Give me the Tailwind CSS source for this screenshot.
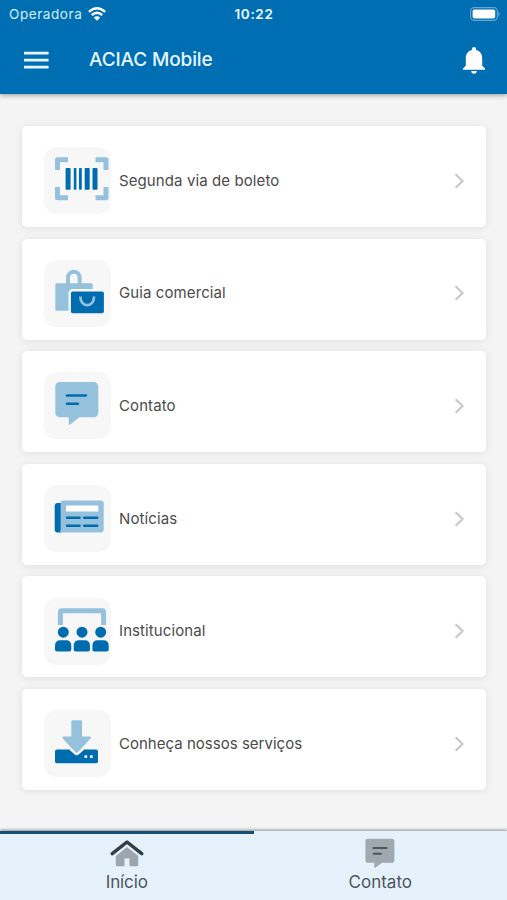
<!DOCTYPE html>
<html lang="pt-BR">
<head>
<meta charset="utf-8">
<meta name="viewport" content="width=device-width, initial-scale=1">
<title>ACIAC Mobile</title>
<script src="https://cdn.jsdelivr.net/npm/@tailwindcss/browser@4"></script>
</head>
<body class="bg-[#f4f4f4] font-['Inter','Liberation_Sans',sans-serif]">
<div class="flex h-[900px] w-[507px] flex-col overflow-hidden">
  <header class="z-10 h-[94px] shrink-0 bg-[#006eb3] text-white shadow-[0_1px_5px_rgba(0,0,0,0.4)]">
    <div class="grid h-[27px] grid-cols-3 items-center pl-[9px] pr-[7px]">
      <div class="flex items-center gap-[6px]">
        <span class="pt-px text-[13.5px] tracking-[0.57px] text-[#d3eefc]">Operadora</span>
        <svg class="h-[14px] w-[18px]" viewBox="0 0 18 14" fill="none" stroke="#fff" stroke-width="2.4"><path d="M.9 4.9Q9-2.3 17.1 4.9M3.8 8Q9 3.4 14.2 8"/><path d="M9 13.7 5.8 10.5Q9 7.9 12.2 10.5Z" fill="#fff" stroke="none"/></svg>
      </div>
      <span class="pr-[1px] pt-px text-center text-[13.5px] font-semibold tracking-[0.65px] text-[#edf9ff]">10:22</span>
      <svg class="h-[14px] w-[31px] justify-self-end" viewBox="0 0 31 14"><rect x="1.6" y=".6" width="26.8" height="12.8" rx="3.6" fill="none" stroke="#65a8d3" stroke-width="1.1"/><rect x="3.6" y="2.5" width="22.6" height="9" rx="1.8" fill="#fff"/><path d="M29.4 4.6Q32 7 29.4 9.4Z" fill="#65a8d3"/></svg>
    </div>
    <div class="flex h-[66px] items-center pl-6 pr-[22px]">
      <svg class="h-[18px] w-[25px]" viewBox="0 0 25 18" fill="#e4f7ff"><path d="M0 .7h24.6v2.7H0zM0 7.7h24.6v2.7H0zM0 14.7h24.6v2.7H0z"/></svg>
      <h1 class="ml-[40px] pt-px text-[19px] font-medium tracking-[-0.12px] text-[#e4f7ff]">ACIAC Mobile</h1>
      <svg class="ml-auto h-[27px] w-[22px]" viewBox="0 0 22 27" fill="#fff"><path d="M0 22.7v-1.2l2.8-2.8v-7.2c0-4.4 2.1-7.4 6.1-8.4V2.2a2.1 2.1 0 0 1 4.2 0v.9c4 1 6.1 4 6.1 8.4v7.2l2.8 2.8v1.2zM8.3 24h5.4a2.7 2.7 0 0 1-5.4 0z"/></svg>
    </div>
  </header>

  <main class="flex grow flex-col gap-[11.6px] px-[22px] pt-8 text-[15px] tracking-[0.1px] text-[#4b4b4b]">
    <a class="flex h-[101px] w-[464px] shrink-0 items-center rounded-[5px] bg-white pl-[22px] pr-[21px] pt-[8px] shadow-[0_1px_9px_rgba(0,0,0,0.09)]">
      <span class="size-[67px] rounded-[13px] bg-[#f7f7f7]"><svg class="size-[67px]" viewBox="0 0 67 67">
        <path d="M24 12.8H13.5V23M51.5 12.8H62V23M13.5 40V50.7H24M62 40V50.7H51.5" fill="none" stroke="#95c1dd" stroke-width="5" stroke-linejoin="round"/>
        <g fill="#006cb0"><rect x="21.6" y="21" width="5" height="21.7" rx=".8"/><rect x="29.8" y="21" width="2.6" height="21.7" rx=".6"/><rect x="35" y="21" width="2.8" height="21.7" rx=".6"/><rect x="40.7" y="21" width="5" height="21.7" rx=".8"/><rect x="48.5" y="21" width="5" height="21.7" rx=".8"/></g></svg></span>
      <span class="ml-2 pt-px">Segunda via de boleto</span>
      <svg class="ml-auto h-[16px] w-[11px]" viewBox="0 0 11 16" fill="none" stroke="#c9c9c9" stroke-width="2.2"><path d="m1.7 1.2 6.8 6.8-6.8 6.8"/></svg>
    </a>
    <a class="flex h-[101px] w-[464px] shrink-0 items-center rounded-[5px] bg-white pl-[22px] pr-[21px] pt-[8px] shadow-[0_1px_9px_rgba(0,0,0,0.09)]">
      <span class="size-[67px] rounded-[13px] bg-[#f7f7f7]"><svg class="size-[67px]" viewBox="0 0 67 67">
        <rect x="11.3" y="23.3" width="37.4" height="27.4" rx="1.5" fill="#95c1dd"/><path d="M24 25V17.5a5.8 5.8 0 0 1 11.6 0V25" fill="none" stroke="#95c1dd" stroke-width="3.9"/>
        <rect x="25.7" y="30.2" width="35.4" height="24.2" rx="3" fill="#006cb0" stroke="#f7f7f7" stroke-width="2.4"/><path d="M36.4 36.4v.8a6.8 7.9 0 0 0 13.6 0v-.8" fill="none" stroke="#95c1dd" stroke-width="2.7"/></svg></span>
      <span class="ml-2 pt-px">Guia comercial</span>
      <svg class="ml-auto h-[16px] w-[11px]" viewBox="0 0 11 16" fill="none" stroke="#c9c9c9" stroke-width="2.2"><path d="m1.7 1.2 6.8 6.8-6.8 6.8"/></svg>
    </a>
    <a class="flex h-[101px] w-[464px] shrink-0 items-center rounded-[5px] bg-white pl-[22px] pr-[21px] pt-[8px] shadow-[0_1px_9px_rgba(0,0,0,0.09)]">
      <span class="size-[67px] rounded-[13px] bg-[#f7f7f7]"><svg class="size-[67px]" viewBox="0 0 67 67">
        <g transform="translate(0 .5)"><path d="M15.8 9.4h34a4.5 4.5 0 0 1 4.5 4.5v26.3a4.5 4.5 0 0 1-4.5 4.5H35.3l-9.2 7.4q-1.4.8-1.4-.7v-6.7h-8.9a4.5 4.5 0 0 1-4.5-4.5V13.9a4.5 4.5 0 0 1 4.5-4.5z" fill="#95c1dd"/><path d="M23 23h19M23 31.3h11" stroke="#006cb0" stroke-width="2.6" stroke-linecap="round"/></g></svg></span>
      <span class="ml-2 pt-[2px]">Contato</span>
      <svg class="ml-auto h-[16px] w-[11px]" viewBox="0 0 11 16" fill="none" stroke="#c9c9c9" stroke-width="2.2"><path d="m1.7 1.2 6.8 6.8-6.8 6.8"/></svg>
    </a>
    <a class="flex h-[101px] w-[464px] shrink-0 items-center rounded-[5px] bg-white pl-[22px] pr-[21px] pt-[9px] shadow-[0_1px_9px_rgba(0,0,0,0.09)]">
      <span class="size-[67px] rounded-[13px] bg-[#f7f7f7]"><svg class="size-[67px]" viewBox="0 0 67 67">
        <path d="M17.3 18h-3.6a3 3 0 0 0-3 3v23.5a3 3 0 0 0 3 3h3.6z" fill="#006cb0"/><path d="M19 15.5h38a2.7 2.7 0 0 1 2.7 2.7v26.3a3 3 0 0 1-3 3H15.5q1.1-.8 1.1-3V18.2q0-2.7 2.4-2.7z" fill="#95c1dd"/><rect x="22" y="20.6" width="32.3" height="5.9" rx=".6" fill="#fff"/><path d="M23 32.8h12.5M40.2 32.8h13M23 40.8h12.5M40.2 40.8h13" stroke="#006cb0" stroke-width="2.5" stroke-linecap="round"/></svg></span>
      <span class="ml-2 pt-px">Notícias</span>
      <svg class="ml-auto h-[16px] w-[11px]" viewBox="0 0 11 16" fill="none" stroke="#c9c9c9" stroke-width="2.2"><path d="m1.7 1.2 6.8 6.8-6.8 6.8"/></svg>
    </a>
    <a class="flex h-[101px] w-[464px] shrink-0 items-center rounded-[5px] bg-white pl-[22px] pr-[21px] pt-[9px] shadow-[0_1px_9px_rgba(0,0,0,0.09)]">
      <span class="size-[67px] rounded-[13px] bg-[#f7f7f7]"><svg class="size-[67px]" viewBox="0 0 67 67">
        <path d="M16.4 27V14.2a1.5 1.5 0 0 1 1.5-1.5h40.2a1.5 1.5 0 0 1 1.5 1.5V27" fill="none" stroke="#95c1dd" stroke-width="5"/>
        <g fill="#006cb0"><g stroke="#f7f7f7" stroke-width="1.6"><circle cx="19.3" cy="34.2" r="6.3"/><circle cx="38" cy="34.2" r="6.3"/><circle cx="56.7" cy="34.2" r="6.3"/></g><path id="person" d="M15.5 42.2h7.3q4.5.6 4.5 5.5v3.8a2 2 0 0 1-2 2H13a2 2 0 0 1-2-2v-3.8q0-4.9 4.5-5.5z"/><use href="#person" x="18.7"/><use href="#person" x="37.4"/></g></svg></span>
      <span class="ml-2">Institucional</span>
      <svg class="ml-auto h-[16px] w-[11px]" viewBox="0 0 11 16" fill="none" stroke="#c9c9c9" stroke-width="2.2"><path d="m1.7 1.2 6.8 6.8-6.8 6.8"/></svg>
    </a>
    <a class="flex h-[101px] w-[464px] shrink-0 items-center rounded-[5px] bg-white pl-[22px] pr-[21px] pt-[9px] shadow-[0_1px_9px_rgba(0,0,0,0.09)]">
      <span class="size-[67px] rounded-[13px] bg-[#f7f7f7]"><svg class="size-[67px]" viewBox="0 0 67 67">
        <rect x="11" y="39.6" width="43" height="13.7" rx="2" fill="#006cb0"/><path d="M25.8 37.5h13.8v2.8l-5.3 4.4q-1.6 1.2-3.2 0l-5.3-4.4z" fill="#f7f7f7"/><path d="M28.3 10.3H37a1 1 0 0 1 1 1v15.3h8q1.8.4.5 1.9L34.1 42.1q-1.4 1.2-2.8 0L18.7 28.5q-1.2-1.5.6-1.9h8V11.3a1 1 0 0 1 1-1z" fill="#95c1dd"/><path d="M40.5 45.3h2.7V48h-2.7zM46 45.3h2.7V48H46z" fill="#e9f5fc"/></svg></span>
      <span class="ml-2 pt-px tracking-[0.02px]">Conheça nossos serviços</span>
      <svg class="ml-auto h-[16px] w-[11px]" viewBox="0 0 11 16" fill="none" stroke="#c9c9c9" stroke-width="2.2"><path d="m1.7 1.2 6.8 6.8-6.8 6.8"/></svg>
    </a>
  </main>

  <nav class="z-10 grid h-[69px] shrink-0 grid-cols-2 bg-[#e5f2fc] text-[17px] text-[#4c555b] shadow-[0_-1px_3px_rgba(0,0,0,0.42)]">
    <a class="flex flex-col items-center border-t-[3px] border-[#125078] pt-[6px]">
      <svg class="h-[28px] w-[34px]" viewBox="0 0 34 28"><path d="M17 7 28.2 16v8.8a1.5 1.5 0 0 1-1.5 1.5H19.5v-7.7h-5v7.7H7.3a1.5 1.5 0 0 1-1.5-1.5V16z" fill="#9ea6ad"/><path d="M2.3 13.6 17 2l14.7 11.6" fill="none" stroke="#343d43" stroke-width="3.5" stroke-linecap="round" stroke-linejoin="round"/></svg>
      <span class="mt-[1px] leading-[26px] tracking-[-0.1px]">Início</span>
    </a>
    <a class="flex flex-col items-center border-t-[3px] border-transparent pt-[4px]">
      <svg class="h-[30px] w-[30px]" viewBox="0 0 30 30"><path d="M3.2 .7h23.4a2.8 2.8 0 0 1 2.8 2.8v18.4a2.8 2.8 0 0 1-2.8 2.8H17l-6.7 5q-1 .6-1-.5v-4.5H3.2a2.8 2.8 0 0 1-2.8-2.8V3.5A2.8 2.8 0 0 1 3.2.7z" fill="#a0a8b0"/><path d="M8.5 10h13M8.5 15.7h7.5" stroke="#4c555c" stroke-width="1.9" stroke-linecap="round"/></svg>
      <span class="mt-[1px] leading-[26px]">Contato</span>
    </a>
  </nav>
</div>
</body>
</html>
